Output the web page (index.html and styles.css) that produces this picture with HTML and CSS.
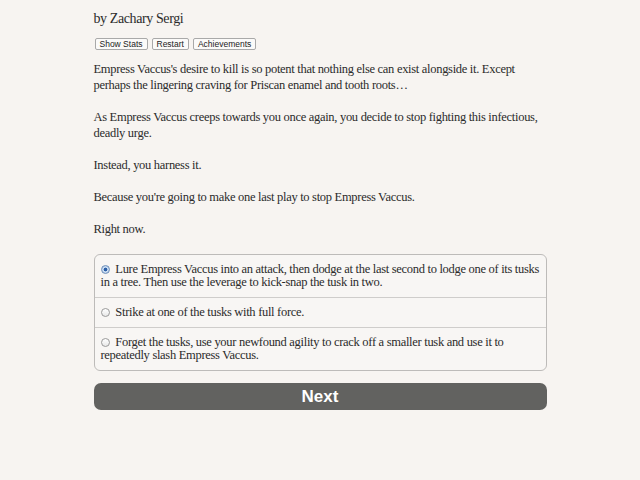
FILE: index.html
```html
<!DOCTYPE html>
<html>
<head>
<meta charset="utf-8">
<title>Empress Vaccus</title>
<link rel="stylesheet" href="styles.css">
</head>
<body>
<div class="page">
  <div class="author">by Zachary Sergi</div>
  <div class="toolbar">
    <button class="tool">Show Stats</button>
    <button class="tool">Restart</button>
    <button class="tool">Achievements</button>
  </div>
  <div class="story">
    <p>Empress Vaccus's desire to kill is so potent that nothing else can exist alongside it. Except perhaps the lingering craving for Priscan enamel and tooth roots…</p>
    <p>As Empress Vaccus creeps towards you once again, you decide to stop fighting this infectious, deadly urge.</p>
    <p>Instead, you harness it.</p>
    <p>Because you're going to make one last play to stop Empress Vaccus.</p>
    <p>Right now.</p>
  </div>
  <form class="choices">
    <label class="choice"><input type="radio" name="c" checked> Lure Empress Vaccus into an attack, then dodge at the last second to lodge one of its tusks in a tree. Then use the leverage to kick-snap the tusk in two.</label>
    <label class="choice"><input type="radio" name="c"> Strike at one of the tusks with full force.</label>
    <label class="choice"><input type="radio" name="c"> Forget the tusks, use your newfound agility to crack off a smaller tusk and use it to repeatedly slash Empress Vaccus.</label>
  </form>
  <button class="next">Next</button>
</div>
</body>
</html>
```
FILE: styles.css
```css
html, body {
  margin: 0;
  padding: 0;
  background: #f7f4f1;
}

.page {
  width: 453px;
  margin: 0 auto;
  padding-top: 9px;
  font-family: "Liberation Serif", serif;
  font-size: 12.5px;
  letter-spacing: -0.3px;
  color: #2b2b2b;
}

.author {
  font-size: 14px;
  letter-spacing: -0.4px;
  line-height: 20px;
}

.toolbar {
  display: flex;
  gap: 4px;
  margin-top: 9px;
  padding-left: 1px;
  letter-spacing: 0;
}

.tool {
  font-family: "Liberation Sans", sans-serif;
  font-size: 8.5px;
  line-height: 10px;
  padding: 0 4px;
  background: #fbfaf9;
  color: #222;
  border: 1px solid #a9a9a9;
  border-radius: 2px;
}

.story {
  margin-top: 11px;
}

.story p {
  margin: 0 0 16px 0;
  line-height: 16px;
}

.choices {
  margin-top: 17px;
  border: 1px solid #bdbbb9;
  border-radius: 6px;
  background: #f8f6f4;
  display: flex;
  flex-direction: column;
}

.choice {
  display: block;
  padding: 8px 6px 8px 6px;
  line-height: 13px;
  border-top: 1px solid #cfcdcb;
}

.choice:first-child {
  border-top: none;
}

/* aqua-style radio: grey ring, blue dot when picked */
.choice input {
  appearance: none;
  -webkit-appearance: none;
  margin: 0 3px 0 0;
  width: 9px;
  height: 9px;
  border: 1px solid #9a9a9a;
  border-radius: 50%;
  background: linear-gradient(#ffffff, #e8e8e8);
  vertical-align: -1px;
}

.choice input:checked {
  border-color: #6f8fb8;
  background: radial-gradient(circle, #2c5fa8 0 1.6px, #cfe0f4 2.2px, #a9c6e8 100%);
}

.next {
  display: block;
  width: 100%;
  margin-top: 12px;
  height: 27px;
  background: #626260;
  color: #fff;
  border: none;
  border-radius: 7px;
  font-family: "Liberation Sans", sans-serif;
  font-weight: bold;
  font-size: 17px;
  letter-spacing: 0;
}
```
